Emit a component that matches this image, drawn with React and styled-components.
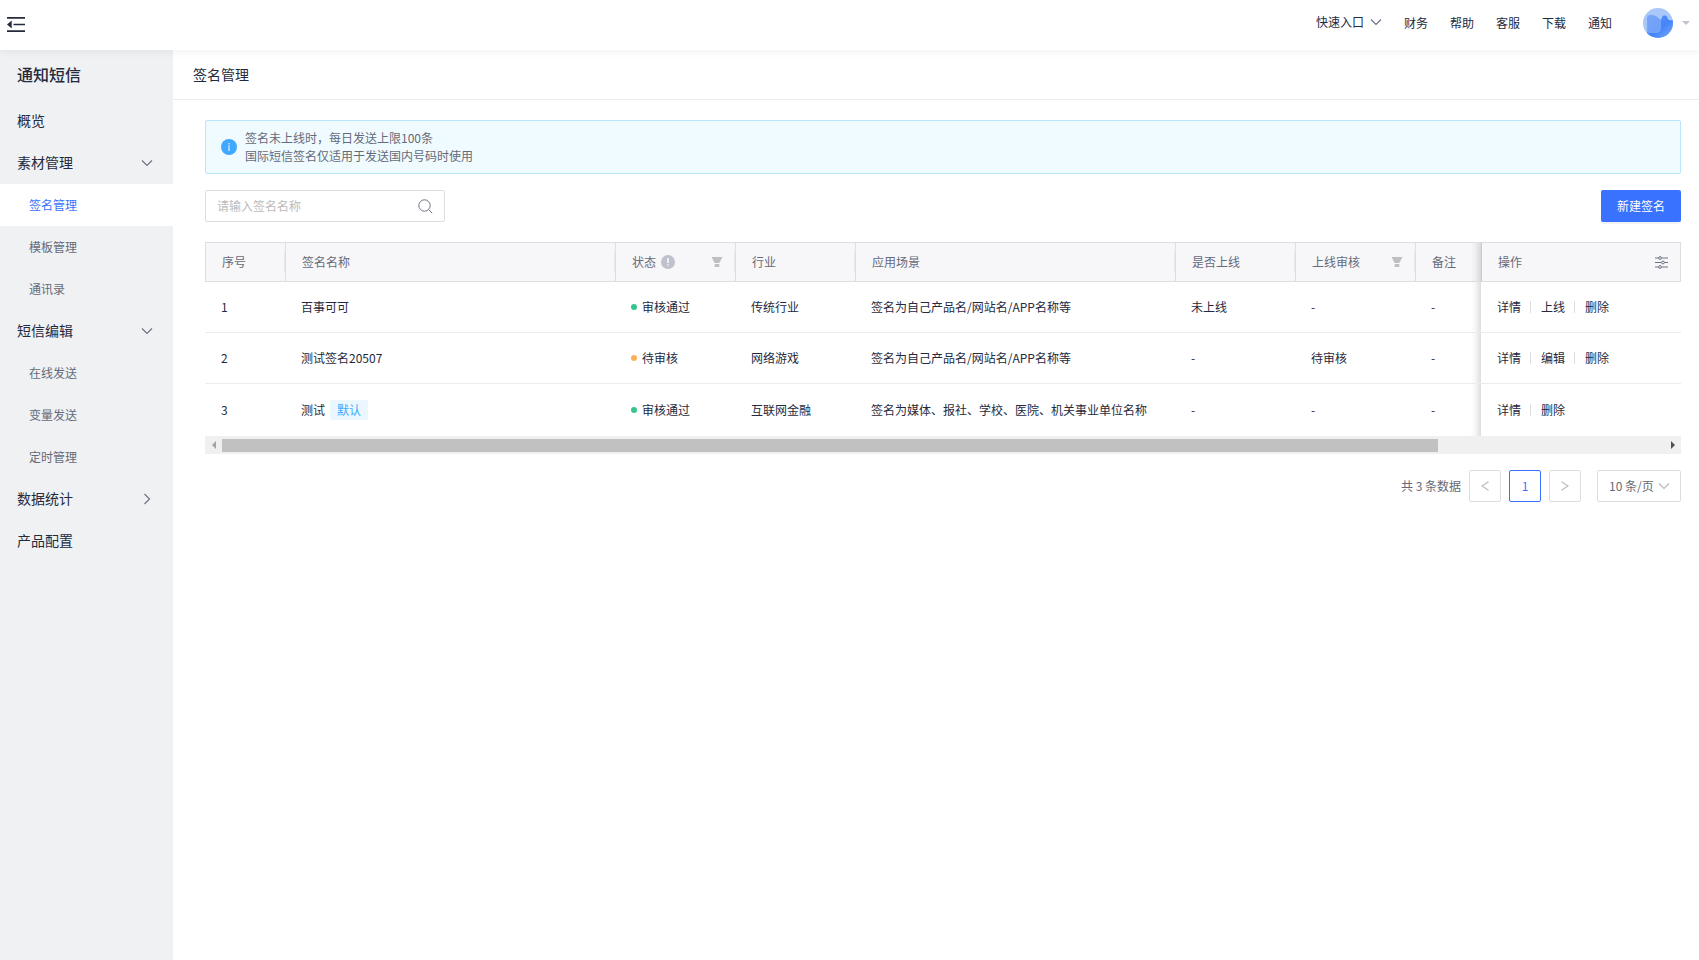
import React from 'react';
import styled, { createGlobalStyle } from 'styled-components';

const colors = {
  primary: '#3872ff',
  text: '#252a3d',
  muted: '#666a78',
  placeholder: '#bbbbbb',
  icon: '#6f7485',
  border: '#dcdee2',
  line: '#ebecee',
  sidebar: '#eff1f3',
  head: '#f7f7fa',
  green: '#36c68c',
  orange: '#ffb057',
};

const GlobalStyle = createGlobalStyle`
  * {
    box-sizing: border-box;
  }

  body {
    margin: 0;
    background: #fff;
    color: ${colors.text};
    font: 12px/18px 'Noto Sans CJK SC', sans-serif;
  }

  button,
  input,
  select {
    font: inherit;
    color: inherit;
  }

  button {
    padding: 0;
    border: 0;
    background: none;
    cursor: pointer;
  }

  a {
    color: inherit;
    text-decoration: none;
  }

  svg {
    display: block;
    flex: none;
  }
`;

const Page = styled.div`
  display: flex;
  flex-direction: column;
  min-height: 100vh;
`;

const Header = styled.header`
  position: relative;
  z-index: 2;
  display: flex;
  align-items: center;
  justify-content: space-between;
  height: 50px;
  padding: 0 9px 0 7px;
  background: #fff;
  box-shadow: 0 2px 8px rgba(0, 0, 0, 0.06);
`;

const TopNav = styled.nav`
  display: flex;
  align-items: center;
  gap: 22px;
  padding-bottom: 4px;
`;

const QuickEntry = styled.button`
  display: flex;
  align-items: center;
  gap: 6px;
  height: 18px;
  margin-bottom: 2px;
`;

const Account = styled.button`
  display: flex;
  align-items: center;
  gap: 9px;
  margin-left: 9px;
`;

const Body = styled.div`
  display: flex;
  flex: 1;
`;

const Sidebar = styled.aside`
  flex: none;
  width: 173px;
  background: ${colors.sidebar};
`;

const SidebarTitle = styled.h1`
  height: 50px;
  margin: 0;
  padding-left: 17px;
  font-size: 16px;
  font-weight: 500;
  line-height: 48px;
`;

const MenuItem = styled.a`
  display: flex;
  align-items: center;
  justify-content: space-between;
  height: 42px;
  padding: 0 20px 2px 17px;
  font-size: 14px;
`;

const MenuArrow = styled.span`
  display: flex;
  justify-content: center;
  width: 12px;
  padding-top: 2px;
`;

const SubItem = styled(MenuItem)`
  padding: 0 20px 0 29px;
  font-size: 12px;
  color: ${props => (props.$active ? colors.primary : colors.muted)};
  background: ${props => (props.$active ? '#fff' : 'none')};
`;

const Main = styled.main`
  flex: 1;
  min-width: 0;
`;

const PageTitle = styled.h2`
  height: 50px;
  margin: 0;
  padding-left: 20px;
  border-bottom: 1px solid ${colors.line};
  font-size: 14px;
  font-weight: 400;
  line-height: 48px;
`;

const Content = styled.div`
  padding: 20px 18px 20px 32px;
`;

const Notice = styled.div`
  display: flex;
  align-items: center;
  gap: 8px;
  padding: 8px 15px;
  border: 1px solid #b8e6ff;
  border-radius: 2px;
  background: #f0fbff;
  color: ${colors.muted};
`;

const Toolbar = styled.div`
  display: flex;
  justify-content: space-between;
  margin: 16px 0 20px;
`;

const SearchBox = styled.label`
  display: flex;
  align-items: center;
  width: 240px;
  height: 32px;
  padding: 0 11px;
  border: 1px solid ${colors.border};
  border-radius: 2px;
`;

const SearchInput = styled.input`
  flex: 1;
  min-width: 0;
  padding: 0;
  border: 0;
  outline: 0;
  background: none;

  &::placeholder {
    color: ${colors.placeholder};
  }
`;

const PrimaryButton = styled.button`
  width: 80px;
  height: 32px;
  border-radius: 2px;
  background: ${colors.primary};
  box-shadow: 0 2px 0 rgba(0, 0, 0, 0.05);
  color: #fff;
`;

const Table = styled.table`
  width: 100%;
  table-layout: fixed;
  border-collapse: separate;
  border-spacing: 0;
`;

const Th = styled.th`
  height: 40px;
  padding: 0 12px 0 16px;
  border: solid ${colors.border};
  border-width: 1px 0 1px 1px;
  background: linear-gradient(#e8e8ec, #e8e8ec) right center / 1px 20px no-repeat
    ${colors.head};
  color: ${colors.muted};
  font-weight: 400;
  text-align: left;
  white-space: nowrap;

  &:last-child {
    border-right-width: 1px;
    border-left-color: #c8c9cd;
    background: ${colors.head};
  }

  &:nth-last-child(2) {
    background: linear-gradient(to left, rgba(0, 0, 0, 0.13), rgba(0, 0, 0, 0.03) 60%, transparent)
      right / 10px 100% no-repeat ${colors.head};
  }
`;

const HeadCell = styled.div`
  display: flex;
  align-items: center;
  gap: 5px;

  & > :last-child:not(:first-child) {
    margin-left: auto;
  }
`;

const Td = styled.td`
  height: 51px;
  padding: 0 16px;
  border-bottom: 1px solid ${colors.line};
  white-space: nowrap;

  tr:last-child & {
    height: 52px;
    border-bottom: 0;
  }

  &:nth-last-child(2) {
    background: linear-gradient(to left, rgba(0, 0, 0, 0.13), rgba(0, 0, 0, 0.03) 60%, transparent)
      right / 10px 100% no-repeat;
  }
`;

const Status = styled.span`
  display: flex;
  align-items: center;
  gap: 5px;

  &::before {
    content: '';
    width: 6px;
    height: 6px;
    border-radius: 50%;
    background: ${props => (props.$pending ? colors.orange : colors.green)};
  }
`;

const Tag = styled.span`
  display: inline-block;
  margin-left: 5px;
  padding: 0 7px;
  border-radius: 2px;
  background: #ebf7ff;
  color: #40a9ff;
  line-height: 20px;
`;

const Actions = styled.div`
  display: flex;
  align-items: center;
`;

const Action = styled.button`
  & + &::before {
    content: '';
    display: inline-block;
    width: 1px;
    height: 12px;
    margin: 0 10px 0 9px;
    background: ${colors.border};
    vertical-align: -1px;
  }
`;

const ScrollBar = styled.div`
  display: flex;
  align-items: center;
  height: 18px;
  background: #f0f0f0;
`;

const ScrollButton = styled.button`
  display: flex;
  align-items: center;
  justify-content: center;
  width: 17px;
  height: 18px;
`;

const ScrollTrack = styled.div`
  flex: 1;
`;

const ScrollThumb = styled.div`
  width: ${props => props.$size}%;
  height: 13px;
  background: #c1c1c1;
`;

const Pagination = styled.div`
  display: flex;
  align-items: center;
  justify-content: flex-end;
  gap: 8px;
  margin-top: 16px;
  color: ${colors.muted};
`;

const PageButton = styled.button`
  display: flex;
  align-items: center;
  justify-content: center;
  width: 32px;
  height: 32px;
  border: 1px solid ${props => (props.$active ? colors.primary : colors.border)};
  border-radius: 2px;
  color: ${props => (props.$active ? colors.primary : colors.placeholder)};
`;

const SizePicker = styled.label`
  display: grid;
  align-items: center;
  width: 84px;
  height: 32px;
  margin-left: 8px;

  & > * {
    grid-area: 1 / 1;
  }

  & > svg {
    justify-self: end;
    margin-right: 11px;
    pointer-events: none;
  }
`;

const SizeSelect = styled.select`
  width: 100%;
  height: 32px;
  padding: 0 24px 0 11px;
  border: 1px solid ${colors.border};
  border-radius: 2px;
  background: #fff;
  appearance: none;
`;

const Chevron = ({ d, width, height, color = colors.icon }) => (
  <svg width={width} height={height} viewBox={`0 0 ${width} ${height}`}>
    <path d={d} fill="none" stroke={color} strokeWidth="1.2" />
  </svg>
);

const DownIcon = ({ color }) => (
  <Chevron width={12} height={8} d="M1 1.5l5 5 5-5" color={color} />
);

const RightIcon = ({ color }) => (
  <Chevron width={8} height={12} d="M1.5 1l5 5-5 5" color={color} />
);

// the arrows of the pager are flatter than those of the menu
const PrevIcon = () => (
  <Chevron width={8} height={10} d="M7.5 .8L1 5l6.5 4.2" color={colors.placeholder} />
);

const NextIcon = () => (
  <Chevron width={8} height={10} d="M.5 .8L7 5L.5 9.2" color={colors.placeholder} />
);

const FoldIcon = () => (
  <svg width="18" height="16" viewBox="0 0 18 16" fill={colors.text}>
    <path d="M0 0h18v1.7H0zM6.5 6.8H18v1.4H6.5zM0 13.3h18V15H0zM0 7.5L4.7 3.6v7.8z" />
  </svg>
);

const Avatar = () => (
  <svg width="30" height="30" viewBox="0 0 30 30">
    <defs>
      <linearGradient id="wave" x1="0" y1="0" x2="1" y2="1">
        <stop offset="0" stopColor="#5a90f9" />
        <stop offset="0.55" stopColor="#4484fb" />
        <stop offset="1" stopColor="#86b0fa" />
      </linearGradient>
      <clipPath id="disc">
        <circle cx="15" cy="15" r="15" />
      </clipPath>
    </defs>
    <g clipPath="url(#disc)">
      <path d="M0 0h30v30H0z" fill="#a9c7f8" />
      <path
        d="M4 11c0-4 4-5 8-3 3 1 5 4 6 4s0-4 3-4.500c3-.5 3 2 4 3.500 1 2 3 1 6 1v19H3c2-6 1-14 1-20z"
        fill="url(#wave)"
      />
      <path
        d="M4 11c0-4 4-5 8-3 3 1.500 5 4 6 4v8c0 3-2 5-5 5H6c-2 0-2-2-2-4z"
        fill="#8db2f8"
        opacity="0.6"
      />
    </g>
  </svg>
);

const CaretIcon = () => (
  <svg width="8" height="4" viewBox="0 0 8 4">
    <path d="M0 0h8L4 4z" fill="#c0c4cc" />
  </svg>
);

const InfoIcon = () => (
  <svg width="16" height="16" viewBox="0 0 16 16">
    <circle cx="8" cy="8" r="8" fill="#40a9ff" />
    <path d="M7.5 4h1v1.5h-1zM7.5 6.500h1V12h-1z" fill="#fff" />
  </svg>
);

const HintIcon = () => (
  <svg width="14" height="14" viewBox="0 0 14 14">
    <circle cx="7" cy="7" r="7" fill="#bfc2cc" />
    <path d="M6.3 3h1.4v5H6.3zM6.3 9.2h1.4v1.4H6.3z" fill="#fff" />
  </svg>
);

const FilterIcon = () => (
  <svg width="12" height="10" viewBox="0 0 12 10" fill="#bfbfbf">
    <path d="M.5 0h11L8.300 6H3.700zM3.700 7h4.600v3H3.700z" />
  </svg>
);

const SearchIcon = () => (
  <svg width="15" height="15" viewBox="0 0 15 15" fill="none" stroke={colors.icon}>
    <circle cx="6.5" cy="6.5" r="5.7" />
    <path d="M10.6 10.6l3.6 3.6" />
  </svg>
);

const SettingIcon = () => (
  <svg width="13" height="13" viewBox="0 0 13 13" fill="none" stroke={colors.icon}>
    <path d="M0 2h3.5M6.5 2H13M0 6.5h6.500M9.500 6.500H13M0 11h3.500M6.500 11H13" />
    <circle cx="5" cy="2" r="1.4" />
    <circle cx="8" cy="6.5" r="1.4" />
    <circle cx="5" cy="11" r="1.4" />
  </svg>
);

const Arrow = ({ d, color }) => (
  <svg width="4" height="8" viewBox="0 0 4 8">
    <path d={d} fill={color} />
  </svg>
);

const topLinks = ['财务', '帮助', '客服', '下载', '通知'];

const menu = [
  { name: '概览' },
  { name: '素材管理', open: true, items: ['签名管理', '模板管理', '通讯录'] },
  { name: '短信编辑', open: true, items: ['在线发送', '变量发送', '定时管理'] },
  { name: '数据统计', items: [] },
  { name: '产品配置' },
];

const columns = [
  { title: '序号', width: 80 },
  { title: '签名名称' },
  { title: '状态', width: 120, hint: true, filter: true },
  { title: '行业', width: 120 },
  { title: '应用场景', width: 320 },
  { title: '是否上线', width: 120 },
  { title: '上线审核', width: 120, filter: true },
  { title: '备注', width: 66 },
  { title: '操作', width: 200, setting: true },
];

const rows = [
  {
    name: '百事可可',
    status: '审核通过',
    industry: '传统行业',
    scene: '签名为自己产品名/网站名/APP名称等',
    online: '未上线',
    review: '-',
    actions: ['详情', '上线', '删除'],
  },
  {
    name: '测试签名20507',
    status: '待审核',
    pending: true,
    industry: '网络游戏',
    scene: '签名为自己产品名/网站名/APP名称等',
    online: '-',
    review: '待审核',
    actions: ['详情', '编辑', '删除'],
  },
  {
    name: '测试',
    isDefault: true,
    status: '审核通过',
    industry: '互联网金融',
    scene: '签名为媒体、报社、学校、医院、机关事业单位名称',
    online: '-',
    review: '-',
    actions: ['详情', '删除'],
  },
];

const SideMenu = () => (
  <Sidebar>
    <SidebarTitle>通知短信</SidebarTitle>
    <nav>
      {menu.map(({ name, open, items }) => (
        <React.Fragment key={name}>
          <MenuItem href="#">
            {name}
            {items && <MenuArrow>{open ? <DownIcon /> : <RightIcon />}</MenuArrow>}
          </MenuItem>
          {open &&
            items.map(item => (
              <SubItem key={item} href="#" $active={item === '签名管理'}>
                {item}
              </SubItem>
            ))}
        </React.Fragment>
      ))}
    </nav>
  </Sidebar>
);

const SignTable = () => (
  <Table>
    <colgroup>
      {columns.map(({ title, width }) => (
        <col key={title} width={width} />
      ))}
    </colgroup>
    <thead>
      <tr>
        {columns.map(({ title, hint, filter, setting }) => (
          <Th key={title}>
            <HeadCell>
              <span>{title}</span>
              {hint && <HintIcon />}
              {filter && <FilterIcon />}
              {setting && <SettingIcon />}
            </HeadCell>
          </Th>
        ))}
      </tr>
    </thead>
    <tbody>
      {rows.map((row, index) => (
        <tr key={row.name}>
          <Td>{index + 1}</Td>
          <Td>
            {row.name}
            {row.isDefault && <Tag>默认</Tag>}
          </Td>
          <Td>
            <Status $pending={row.pending}>{row.status}</Status>
          </Td>
          <Td>{row.industry}</Td>
          <Td>{row.scene}</Td>
          <Td>{row.online}</Td>
          <Td>{row.review}</Td>
          <Td>-</Td>
          <Td>
            <Actions>
              {row.actions.map(action => (
                <Action key={action}>{action}</Action>
              ))}
            </Actions>
          </Td>
        </tr>
      ))}
    </tbody>
  </Table>
);

const App = () => (
  <Page>
    <GlobalStyle />
    <Header>
      <button aria-label="收起菜单">
        <FoldIcon />
      </button>
      <TopNav>
        <QuickEntry>
          快速入口
          <DownIcon />
        </QuickEntry>
        {topLinks.map(link => (
          <a key={link} href="#">
            {link}
          </a>
        ))}
        <Account aria-label="账号">
          <Avatar />
          <CaretIcon />
        </Account>
      </TopNav>
    </Header>
    <Body>
      <SideMenu />
      <Main>
        <PageTitle>签名管理</PageTitle>
        <Content>
          <Notice>
            <InfoIcon />
            <div>
              签名未上线时，每日发送上限100条
              <br />
              国际短信签名仅适用于发送国内号码时使用
            </div>
          </Notice>
          <Toolbar>
            <SearchBox>
              <SearchInput placeholder="请输入签名名称" aria-label="签名名称" />
              <SearchIcon />
            </SearchBox>
            <PrimaryButton>新建签名</PrimaryButton>
          </Toolbar>
          <SignTable />
          <ScrollBar>
            <ScrollButton aria-label="向左滚动">
              <Arrow d="M4 0v8L0 4z" color="#a3a3a3" />
            </ScrollButton>
            <ScrollTrack>
              <ScrollThumb $size={84.3} />
            </ScrollTrack>
            <ScrollButton aria-label="向右滚动">
              <Arrow d="M0 0v8l4-4z" color="#505050" />
            </ScrollButton>
          </ScrollBar>
          <Pagination>
            <span>共 3 条数据</span>
            <PageButton aria-label="上一页">
              <PrevIcon />
            </PageButton>
            <PageButton $active>1</PageButton>
            <PageButton aria-label="下一页">
              <NextIcon />
            </PageButton>
            <SizePicker>
              <SizeSelect aria-label="每页条数">
                <option>10 条/页</option>
              </SizeSelect>
              <DownIcon color={colors.placeholder} />
            </SizePicker>
          </Pagination>
        </Content>
      </Main>
    </Body>
  </Page>
);

export default App;
